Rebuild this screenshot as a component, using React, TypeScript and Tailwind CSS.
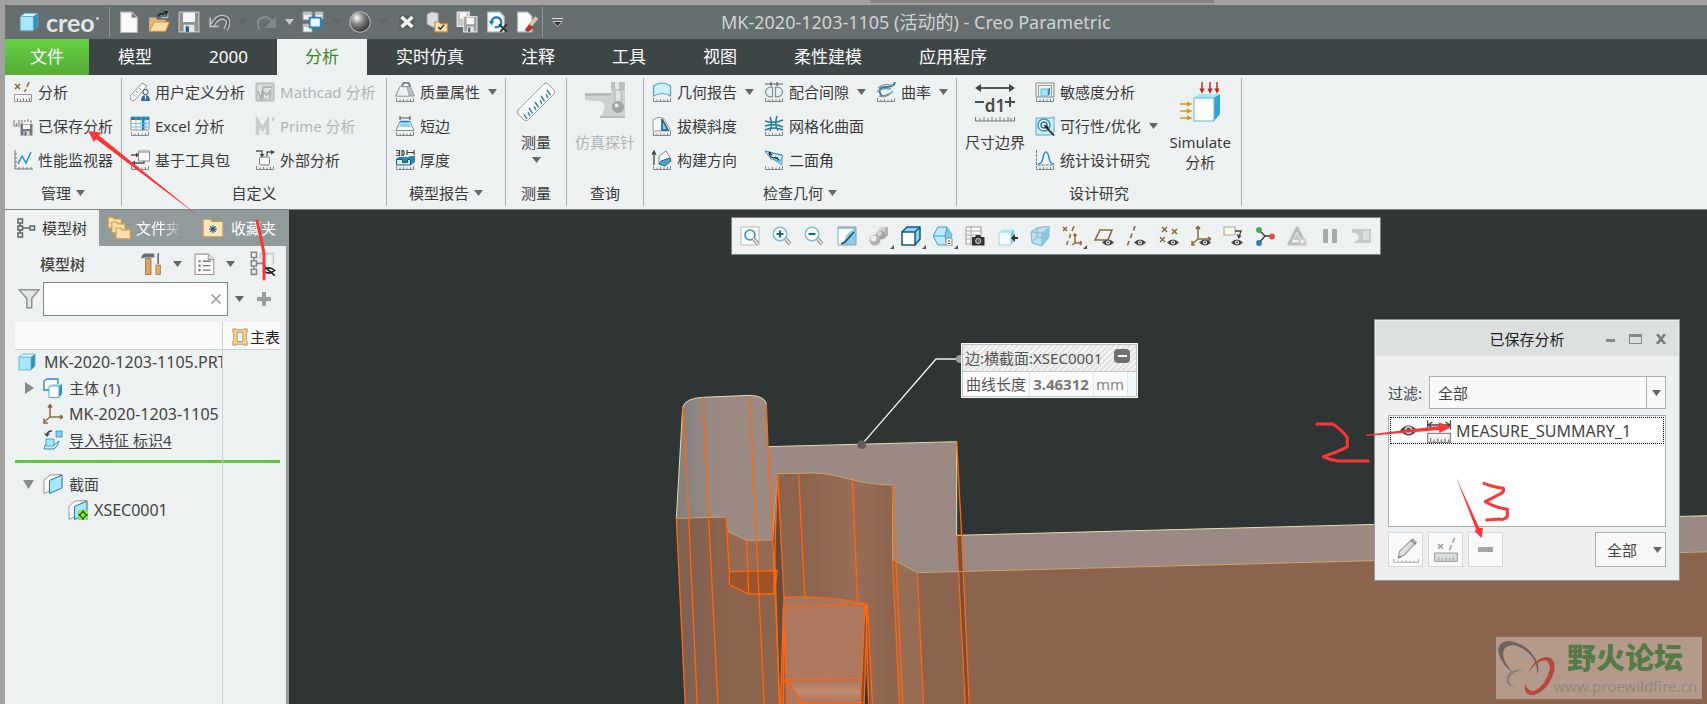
import type { ReactNode } from 'react';
import clsx from 'clsx';

const RULER = 'M1.5 16v3.5h17V16M5 17.5v2M8.5 17v2.5M12 17.5v2M15.5 17v2.5';

const ruler = <path d={RULER} fill="none" stroke="#858585" strokeWidth="1" />;

const eye = (
	<g>
		<path d="M8 16.5q6-6 12 0q-6 6-12 0z" fill="#444" />
		<circle cx="14" cy="16.4" r="2" fill="#f4f4f4" />
		<circle cx="14" cy="16.4" r=".9" fill="#444" />
	</g>
);

const handle = (
	<g>
		<path d="M13 12l5 6" stroke="#8d8d8d" strokeWidth="3.6" />
		<path d="M13 12l5 6" stroke="#e8e8e8" strokeWidth="1.6" />
	</g>
);

const iconShapes = {
	cube: (
		<g>
			<path d="M2 5l4-3h12l-4 3z" fill="#dff6fd" />
			<path d="M14 5l4-3v12l-4 4z" fill="#2f93bd" />
			<path d="M2 5h12v13H2z" fill="#a6e7fb" />
			<path d="M2 5h12v13H2zM2 5l4-3h12v12l-4 4" fill="none" stroke="#5aa9c9" strokeWidth=".8" />
		</g>
	),
	newFile: (
		<path d="M2.500 1h10l5 5v13.500h-15zM12.500 1v5h5" fill="#fafafa" stroke="#b9bdbd" />
	),
	open: (
		<g>
			<path d="M1 18V6h6l1.500 2H16v10z" fill="#e0b774" />
			<path d="M1.500 18.500l4-8.500H19.500l-3.500 8.500z" fill="#fbdd9f" stroke="#c98f3f" strokeWidth=".8" />
			<path d="M9 5q2-4 6-2" fill="none" stroke="#222" strokeWidth="1.600" />
			<path d="M14 0h4v5z" fill="#222" />
			<path d="M12 6h6V2" fill="none" stroke="#ddd" strokeWidth=".7" />
		</g>
	),
	save: (
		<g>
			<path d="M1 1h18v18H1z" fill="#8d9191" stroke="#c5c8c8" />
			<path d="M4.500 1.500h11V10h-11z" fill="#f5f5f5" />
			<path d="M5 12.500h10V19H5z" fill="#e4e4e4" />
			<path d="M7 14h3v5H7z" fill="#2c5a78" />
		</g>
	),
	undo: (
		<g fill="none">
			<path d="M2 6v8h8" stroke="#c4c8c8" strokeWidth="1.400" />
			<path d="M4 13Q9 4 15 6t1 11" stroke="#c4c8c8" strokeWidth="4.400" />
			<path d="M4 13Q9 4 15 6t1 11" stroke="#555c5d" strokeWidth="2" />
		</g>
	),
	redo: (
		<g fill="none" stroke="#828a8b">
			<path d="M4 17Q0 8 7 6t9 7" strokeWidth="2" />
			<path d="M18.500 6v9H10z" fill="#828a8b" />
		</g>
	),
	windows: (
		<g stroke="#aab0b0" strokeWidth=".8">
			<path d="M1 1h8v7H1zM12 1h7v6h-7zM1 12h8v7H1z" fill="#f2f2f2" />
			<path d="M1 1h8v2H1zM12 1h7v2h-7zM1 12h8v2H1z" fill="#c9cccc" />
			<path d="M7 6h10v9H7z" fill="#e9f8ff" stroke="#2087b7" strokeWidth="1.600" />
		</g>
	),
	sphere: (
		<circle cx="10" cy="10" r="9.300" fill="url(#sphere-shade)" stroke="#aeb3b3" strokeWidth="1" />
	),
	closeWindow: (
		<g>
			<path d="M3 4h14v12H3z" fill="#5b6162" />
			<path d="M5 5.500l10 9M15 5.500l-10 9" stroke="#f3f3f3" strokeWidth="3.200" />
		</g>
	),
	regenerate: (
		<g>
			<path d="M1 3l4-2 6 1v8l-4 5-6-3z" fill="#d9dcdc" stroke="#aaa" strokeWidth=".7" />
			<path d="M8 10h4l1 1.500h6.500V19H8z" fill="#fbe0a8" stroke="#c18a3c" />
			<path d="M11 14.500l2 2 3.500-4" fill="none" stroke="#333" strokeWidth="1.300" />
		</g>
	),
	saveCopy: (
		<g>
			<path d="M1 1h11v13H1z" fill="#c6c9c9" stroke="#e9e9e9" />
			<path d="M3.500 1.500h6V7h-6z" fill="#f5f5f5" />
			<path d="M7 5h12v14H7z" fill="#9a9e9e" stroke="#e4e4e4" />
			<path d="M9.500 6h7v6h-7z" fill="#fafafa" />
			<path d="M10 14h6v5h-6z" fill="#e4e4e4" />
			<path d="M11 15h2v4h-2z" fill="#3e6a87" />
		</g>
	),
	preview: (
		<g>
			<path d="M1.500 1h11l4 4v14h-15z" fill="#f7fafa" stroke="#b9bdbd" />
			<path d="M5 10a4.500 4.500 0 1 1 3 4.500" fill="none" stroke="#1b7fae" strokeWidth="2" />
			<path d="M2.500 9h5L5 13z" fill="#1b7fae" />
			<path d="M12 12l7 7M19 12l-6 7" stroke="#333" strokeWidth="1.800" />
		</g>
	),
	erase: (
		<g>
			<path d="M1.500 1h9l4 4v14h-13z" fill="#fafafa" stroke="#b9bdbd" />
			<path d="M19 6l-7 8" stroke="#d9c3a8" strokeWidth="3.600" />
			<path d="M12 12l-4 5q2 3 5 1l3-3.500z" fill="#b3372f" />
		</g>
	),
	analysis: (
		<g>
			<path d="M2 2l5 5M7 2L2 7M16 0l-2 5M13 7l-1.500 3" fill="none" stroke="#8a6d3b" strokeWidth="1.600" />
			<path d="M1.500 12.500h17v7h-17z" fill="#f4f4f4" stroke="#999" />
			<path d="M4.500 16v3M7.500 17v2M10.500 16v3M13.500 17v2M16.500 16v3" stroke="#777" />
		</g>
	),
	savedAnalysis: (
		<g>
			<path d="M1 4v6h6M3.500 7v3M6 4v5M9 4v4M12 4v2M15 3v3M18 4v3" fill="none" stroke="#888" strokeWidth="1.200" />
			<path d="M7.500 8h12v11.500h-12z" fill="#777" />
			<path d="M10 8.500h7V13h-7z" fill="#f3f3f3" />
			<path d="M10.500 15h6v4.500h-6z" fill="#ddd" />
			<path d="M11.500 15.500h2v4h-2z" fill="#3e6a87" />
		</g>
	),
	monitor: (
		<g fill="none">
			<path d="M2 0v19h18M2 4h2M2 8h2M2 12h2M2 16h2M6 19v-2M10 19v-2M14 19v-2M18 19v-2" stroke="#777" />
			<path d="M5 14l4-8 4 7 5-11" stroke="#2b8fc0" strokeWidth="1.500" />
		</g>
	),
	userDefined: (
		<g>
			<path d="M0 14L12 1l5 3-12 14q-2 2-4 0z" fill="#f5f5f5" stroke="#999" />
			<path d="M3 12l2 2M6 9l2 2M9 6l2 2" stroke="#999" />
			<circle cx="15.500" cy="10" r="2.600" fill="#e7f3f9" stroke="#444" />
			<path d="M11 19q0-6 4.500-6t4.500 6z" fill="#2b6f9d" />
			<path d="M14.500 13.500h2l-1 5z" fill="#fff" />
		</g>
	),
	excel: (
		<g>
			<path d="M1 1h18v13H1z" fill="#fff" stroke="#8d9598" />
			<path d="M1 1h18v3H1zM12 4h2.500v10H12z" fill="#1f7fb0" />
			<path d="M1 7.500h18M1 11h18M6 1v13M11 1v13M16 1v13" stroke="#6fb8dc" strokeWidth=".9" />
			{ruler}
		</g>
	),
	toolkit: (
		<g>
			<path d="M8.500 1h11v10h-11z" fill="#fafafa" stroke="#888" />
			<path d="M9 1h10v2H9z" fill="#bbb" />
			<path d="M1 5h6M4 13h10v-2" fill="none" stroke="#555" strokeWidth="1.300" />
			<path d="M6 2.500L9 5 6 7.500zM5 10.500L1.500 13 5 15.500z" fill="#444" />
			{ruler}
		</g>
	),
	mathcad: (
		<g>
			<path d="M1 1h18v18H1z" fill="#c9cccc" stroke="#b2b5b5" />
			<path d="M3 3h13v13H3z" fill="#dfe2e2" />
			<path d="M3 9l3 8L8 5h9M8 16V9l3.500 4L15 9v7" fill="none" stroke="#aaa" strokeWidth="1.500" />
		</g>
	),
	prime: (
		<g fill="none" stroke="#c9cdcd">
			<path d="M2.500 19V5l5 8 5-8v14" strokeWidth="3.600" />
			<path d="M18.500 1l-1 4" strokeWidth="2.200" />
		</g>
	),
	external: (
		<g>
			<rect x="4.500" y="7" width="10" height="8" rx="1.500" fill="#fafafa" stroke="#777" />
			<path d="M1 1h6v4M12 6V2h5" fill="none" stroke="#555" strokeWidth="1.300" />
			<path d="M4.500 4h5L7 7.500zM16 0l4 2-4 2.500z" fill="#444" />
			{ruler}
		</g>
	),
	mass: (
		<g>
			<path d="M7 5q0-4.500 4-4.500T15 5" fill="none" stroke="#777" strokeWidth="1.800" />
			<path d="M5 4.500h10l4.500 9.500H.500z" fill="#b7c1c5" stroke="#8c9396" />
			<path d="M5 4.500L1 14h13l-2-9z" fill="#eef1f2" stroke="#8c9396" strokeWidth=".6" />
			{ruler}
		</g>
	),
	shortEdge: (
		<g>
			<path d="M5 0v4M15 0v4M5 2h10" stroke="#555" strokeWidth="1.200" />
			<path d="M5 5.500h10l4 9H1z" fill="#fafafa" stroke="#888" />
			<path d="M6 6h8l2 5H4z" fill="#8fd8f5" />
			<path d="M5 5.500h10" stroke="#1b7fae" strokeWidth="1.400" />
			{ruler}
		</g>
	),
	thickness: (
		<g>
			<path d="M1 .500h3.500v5H1M1.500 3h3M7 .500v5h1q2.500-2.500 0-5zM12 0v5M19 0v5M12 2.500h7" fill="none" stroke="#444" strokeWidth="1.200" />
			<path d="M1 9l3-2h9l3-1h4v6l-4 3H1z" fill="#2a86b4" />
			<path d="M1.500 9.500h6v3h5v-3h3v5.500h-14z" fill="#d9f2fc" stroke="#14587d" />
			{ruler}
		</g>
	),
	geometryReport: (
		<g>
			<path d="M1.500 14V4q8-6 17 0v10q-8-5-17 0z" fill="#c9f0fc" stroke="#5f9db8" strokeWidth="1.200" />
			{ruler}
		</g>
	),
	draft: (
		<g>
			<path d="M1 4q7-5 11-1l7 12H1z" fill="#f5f5f5" stroke="#999" />
			<path d="M10 14V3l6 11z" fill="#77cdee" stroke="#14587d" strokeWidth="1.500" />
			{ruler}
		</g>
	),
	buildDirection: (
		<g>
			<path d="M2 15V2M0 5l2-4 2 4" fill="none" stroke="#444" strokeWidth="1.300" />
			<path d="M7 6l7-5 5 8-6 6-6-1z" fill="#fafafa" stroke="#888" />
			<path d="M7 14l2-3 9-3 1 3-6 5z" fill="#49a9d3" stroke="#1b6a94" />
			{ruler}
		</g>
	),
	clearance: (
		<g>
			<path d="M1 2h6M13 2h6M7 0v4M13 0v4M7 2h6" stroke="#555" strokeWidth="1.200" />
			<path d="M8.500 5v10q-7 0-7-5t7-5zM11.500 5v10q7 0 7-5t-7-5z" fill="#dff2f8" stroke="#7e8e95" strokeWidth="1.200" />
			{ruler}
		</g>
	),
	meshSurface: (
		<g fill="none" stroke="#1f78a5" strokeWidth="1.500">
			<path d="M1 5q9 3 18-1M1 10q9-3 18 1M1 14q9-4 18 0M6 1q3 7 0 14M13 0q-3 8 1 15" />
			{ruler}
		</g>
	),
	dihedral: (
		<g>
			<path d="M1 1l17 4v10L6 7z" fill="#8fdcf8" stroke="#2b8fc0" strokeWidth=".8" />
			<path d="M1 1l6 8 9 2 3-5z" fill="#c9f0fc" stroke="#2b8fc0" strokeWidth=".8" />
			<path d="M5 3q1 6 9 5M5 2l3 3M15 10l-4-3" fill="none" stroke="#222" strokeWidth="1.300" />
			{ruler}
		</g>
	),
	curvature: (
		<g fill="none">
			<path d="M19 0q-1 5-9 5t-6 6 9 1" stroke="#1f78a5" strokeWidth="1.800" />
			<path d="M2 6q8-6 15-2M1 10q6-5 14-3M3 14q8 2 14-5" stroke="#8d9598" strokeWidth="1.400" />
			{ruler}
		</g>
	),
	sensitivity: (
		<g>
			<path d="M1 1h18v14H1z" fill="#f4f4f4" stroke="#888" />
			<path d="M3.500 15V3.500h13V15" fill="none" stroke="#999" />
			<path d="M6 7h7v7H6z" fill="#a6e7fb" stroke="#5fb7d9" />
			<path d="M13 7l2-1.500V12l-2 2z" fill="#2b8fc0" />
			{ruler}
		</g>
	),
	feasibility: (
		<g>
			<path d="M1 2h15l3-1v15l-3 3H1z" fill="#c7eefb" stroke="#5aa9c9" />
			<circle cx="9" cy="9" r="6" fill="#fff" stroke="#4d8fb0" strokeWidth="1.500" />
			<circle cx="9" cy="9" r="3" fill="none" stroke="#1f78a5" strokeWidth="1.500" />
			<path d="M8 8l6 3-2 2z" fill="#222" />
			<path d="M10 10l9 9.500" stroke="#222" strokeWidth="1.800" />
		</g>
	),
	statistics: (
		<g fill="none">
			<path d="M1.500 0v15h18" stroke="#777" strokeDasharray="3 1" />
			<path d="M3 14q4 0 5-6t3-6 3 6 5 6" stroke="#2b8fc0" strokeWidth="1.500" />
			{ruler}
		</g>
	),
	measure: (
		<g>
			<path d="M1 14L14 1q1-.800 2 0l3 3q.800 1 0 2L6 19q-1 .800-2 0l-3-3q-.800-1 0-2z" fill="#fbfcfc" stroke="#9aa1a3" strokeWidth=".5" />
			<path d="M5.500 18.500L4 16M7 17l-1-1.800M8.300 15.700L6.500 13M10 14l-1-1.800M11.300 12.700L9.500 10M13 11l-1-1.800M14.300 9.700L12.500 7M16 8l-1-1.800M17.300 6.700L15.500 4" stroke="#2b7ea6" strokeWidth=".7" />
		</g>
	),
	probe: (
		<g>
			<path d="M0 5.500h13V4h7v14H7.500Q13 9 5 9.500L0 9z" fill="#cfd1d1" />
			<path d="M0 5.500h13v1.500H0zM7.500 17h12.500v1H7.500z" fill="#b9bcbc" />
			<path d="M13 0h7v4h-7z" fill="#bcbfbf" />
			<path d="M15 0h2v4h-2z" fill="#e4e5e5" />
			<path d="M15 4h3v7h-3z" fill="#e2e4e4" stroke="#a5a8a8" strokeWidth=".4" />
			<circle cx="16.500" cy="12.500" r="2.800" fill="#a3a6a6" stroke="#8f9393" strokeWidth=".3" />
			<circle cx="15.800" cy="11.800" r="1" fill="#e9eaea" />
		</g>
	),
	simulate: (
		<g>
			<path d="M7 8l3-2h10v10l-3 3.500z" fill="#3aa2cf" />
			<path d="M7 8l3-2h10l-3 2z" fill="#a6e7fb" />
			<path d="M7 8h10v11.500H7z" fill="#fff" stroke="#5fb7d9" strokeWidth=".5" />
			<path d="M11 0v4M15 0v4M18.500 0v4" stroke="#c3221b" strokeWidth=".7" />
			<path d="M9.700 3.300h2.600L11 5.900zM13.700 3.300h2.600L15 5.900zM17.200 3.300h2.600l-1.300 2.600z" fill="#c3221b" />
			<path d="M0 11h4M0 14.500h4M0 18h4" stroke="#d69a12" strokeWidth=".8" />
			<path d="M3.500 9.700v2.600L6.300 11zM3.500 13.200v2.600l2.800-1.300zM3.500 16.700v2.600L6.300 18z" fill="#d69a12" />
		</g>
	),
	zoomFit: (
		<g>
			<path d="M1 1h18v18H1z" fill="#fff" stroke="#b5b9b9" />
			<circle cx="10" cy="9" r="5" fill="#f4fbfe" stroke="#2b8fc0" strokeWidth="1.600" />
			{handle}
		</g>
	),
	zoomIn: (
		<g>
			{handle}
			<circle cx="8" cy="8" r="6.800" fill="#fff" stroke="#7fb9d2" strokeWidth="1.400" />
			<path d="M4.500 8h7M8 4.500v7" stroke="#14689a" strokeWidth="2.200" />
		</g>
	),
	zoomOut: (
		<g>
			{handle}
			<circle cx="8" cy="8" r="6.800" fill="#fff" stroke="#7fb9d2" strokeWidth="1.400" />
			<path d="M4.500 8h7" stroke="#14689a" strokeWidth="2.200" />
		</g>
	),
	repaint: (
		<g>
			<path d="M1 1h18v18H1z" fill="#8bcbe4" stroke="#8fa0a7" />
			<path d="M1.500 3H17Q9 8 8 13l-3 5.500H1.500z" fill="#fafafa" />
			<path d="M17 6l-9 10-4 2" stroke="#1d5068" strokeWidth="1.600" fill="none" />
		</g>
	),
	rendering: (
		<g>
			<path d="M10 1q0-1 9 0v8l-4 4-5-4z" fill="#d3d4d4" />
			<path d="M16 1h3v8l-4 4z" fill="#b0b1b1" />
			<circle cx="11.500" cy="9" r="4.500" fill="#a2a2a2" />
			<circle cx="10.500" cy="7.500" r="2.500" fill="#d5d5d5" />
			<circle cx="6" cy="14" r="5.500" fill="#b3b3b3" />
			<circle cx="4.500" cy="12.500" r="3" fill="#ececec" />
		</g>
	),
	displayStyle: (
		<g stroke="#125b80" strokeWidth="1.500" strokeLinejoin="round">
			<path d="M1 6l5-5h13v12l-5 6z" fill="#8fd0ea" />
			<path d="M1 6h13v13H1zM14 6l5-5" fill="#fff" />
		</g>
	),
	orientation: (
		<g>
			<path d="M5 1h9l5 8-5 10H5L0 10z" fill="#bfe9f8" stroke="#3a9cc4" />
			<path d="M14 1l5 8-5 10-2-9z" fill="#7cc8e6" />
			<path d="M0 10h12l2-9M12 10l2 9" fill="none" stroke="#3a9cc4" />
			<path d="M13 12h6v8h-6z" fill="#fafafa" stroke="#888" />
			<path d="M15 15h2M15 17.500h2" stroke="#444" />
		</g>
	),
	viewManager: (
		<g>
			<path d="M1 1h15v17H1z" fill="#fafafa" stroke="#999" />
			<path d="M1 5h15M1 9h15M1 13h8M6 1v17" stroke="#aaa" />
			<path d="M7 11h3l1-2h4l1 2h3.500v8.500H7z" fill="#333" />
			<circle cx="13.200" cy="15" r="2.600" fill="#666" stroke="#eee" strokeWidth=".8" />
		</g>
	),
	activateView: (
		<g>
			<path d="M1 6l4-3h11l-3 3z" fill="#bfeafa" />
			<path d="M13 6l3-3v12l-3 4z" fill="#7cc8e6" />
			<path d="M1 6h12v13H1z" fill="#f2fbfe" stroke="#9ad4ea" />
			<path d="M13 12l4-4v3h3v2h-3v3z" fill="#333" />
		</g>
	),
	perspective: (
		<g>
			<path d="M1 6l6-4 12-2v11l-7 9-10-3z" fill="#b9dff0" stroke="#7fb4cb" />
			<path d="M12 7l7-7v11l-7 9z" fill="#8cc6df" />
			<path d="M1 6l11 1v12M7 2v9l5 1M7 11l-5 5" fill="none" stroke="#8fb6c6" />
		</g>
	),
	datumFilters: (
		<g fill="none" stroke="#8a6d3b" strokeWidth="1.500">
			<path d="M1 1l4 4M5 1L1 5M12 0l-2 5M8.500 8l-1 4M6 15l-1.500 4M13 9v8h6M13 17l-3 2" />
			<path d="M11.500 10L13 8l1.500 2M18 15l2 2-2 2" />
		</g>
	),
	planeDisplay: (
		<g>
			<path d="M6 4h12l-4 10H1z" fill="none" stroke="#8a6d3b" strokeWidth="1.600" />
			{eye}
		</g>
	),
	axisDisplay: (
		<g>
			<path d="M9 0L7.500 4.500M6 7.500l-1.500 4.500M3 15l-1.500 4.500" stroke="#8a6d3b" strokeWidth="1.600" />
			{eye}
		</g>
	),
	pointDisplay: (
		<g>
			<path d="M3 1l5 5M8 1L3 6M13 3l5 5M18 3l-5 5M1 11l5 5M6 11l-5 5" stroke="#8a6d3b" strokeWidth="1.500" />
			{eye}
		</g>
	),
	csysDisplay: (
		<g>
			<path d="M7 1v12h12M7 13l-6 5M5 3l2-3 2 3M17 11l3 2-3 2M1 15v4h3" fill="none" stroke="#8a6d3b" strokeWidth="1.500" />
			{eye}
		</g>
	),
	annotationDisplay: (
		<g>
			<path d="M1 1h11v8H1z" fill="#fdf8e3" stroke="#aaa" strokeWidth="1.200" />
			<path d="M12 5h6l-2 6" fill="none" stroke="#444" strokeWidth="1.300" />
			<path d="M13.500 8l5 2-3 3z" fill="#444" />
			{eye}
		</g>
	),
	spinCenter: (
		<g>
			<path d="M4 4l6 6h7M10 10l-6 7" fill="none" stroke="#333" strokeWidth="1.300" />
			<circle cx="4" cy="4" r="2.900" fill="#4ba653" />
			<circle cx="17" cy="10.500" r="2.900" fill="#dd5145" />
			<circle cx="4" cy="17" r="2.900" fill="#2580b0" />
		</g>
	),
	simulationRun: (
		<g>
			<path d="M10 2l8 16H2z" fill="none" stroke="#b8bcbc" strokeWidth="3" strokeLinejoin="round" />
			<path d="M10 7l3 7H6z" fill="#c6caca" />
			<circle cx="15.500" cy="15.500" r="4" fill="#c9cccc" />
			<path d="M14 13.500v4l3.500-2z" fill="#fff" />
		</g>
	),
	pause: <path d="M3 3h5v14H3zM12 3h5v14h-5z" fill="#a7abac" />,
	probeSmall: (
		<g>
			<path d="M0 3h19v14H1l3-2q6-4 0-8H0z" fill="#c6caca" />
			<path d="M11 5h6v9h-6z" fill="#dcdfdf" />
		</g>
	),
	treeNodes: (
		<g fill="none" stroke="#5c6161" strokeWidth="1.500">
			<path d="M2 1h4.500v4H2zM2 8h4.500v4H2zM2 15h4.500v4H2zM14 8h4.500v4H14zM6.500 10H14M4 5v3M4 12v3" />
		</g>
	),
	folders: (
		<g fill="#fbe0a8" stroke="#c99a52">
			<path d="M1 1h4l1 1.500h6V10H1z" />
			<path d="M4 5h4l1 1.500h6V14H4z" />
			<path d="M7.500 10h4l1 1.500h7V19h-12z" />
		</g>
	),
	favorites: (
		<g>
			<path d="M1 2h7l1 2h10v14H1z" fill="#fbe5b8" stroke="#c99a52" />
			<path d="M10 7.500v7M6.500 11h7M7.500 8.500l5 5M12.500 8.500l-5 5" stroke="#1d5f88" strokeWidth="1.100" />
		</g>
	),
	tools: (
		<g>
			<path d="M5 5h5v14.500H5z" fill="#d9a45c" stroke="#9a6c2c" strokeWidth=".7" />
			<path d="M1 5q0-3 3-4.500h9V4H5z" fill="#666f73" />
			<path d="M16.500 0v10" stroke="#777" strokeWidth="1.600" />
			<path d="M14.500 11h4v8.500h-4z" fill="#e2b068" stroke="#9a6c2c" strokeWidth=".7" />
		</g>
	),
	settingsList: (
		<g>
			<path d="M1 1h12l5 5v13.500H1z" fill="#fcfcfc" stroke="#999" />
			<path d="M13 1v5h5" fill="#ddd" stroke="#999" />
			<path d="M8 7.500h7M8 11.500h7M8 15.500h7" stroke="#777" strokeWidth="1.200" />
			<path d="M4 6.500h2v2H4zM4 10.500h2v2H4zM4 14.500h2v2H4z" fill="#777" />
		</g>
	),
	treeToggle: (
		<g fill="none">
			<path d="M1 1h4v4H1zM1 7.500h4v4H1zM1 14h4v4H1zM3 5v2.500M3 11.500V14M5 9.500h6" stroke="#888" strokeWidth="1.200" />
			<path d="M8 2h10v8M8 2v4" stroke="#c8cccc" strokeWidth="1.200" />
			<path d="M10 15q4.500-4 9 0q-4.500 4-9 0M10 11l9 8" stroke="#222" strokeWidth="1.200" />
		</g>
	),
	filter: (
		<path d="M1 1.500h18l-6.500 8V18H8V9.500z" fill="#e3e6e6" stroke="#8d9292" strokeWidth="1.400" />
	),
	mainTable: (
		<g>
			<path d="M2 1h4l1 1h6l1-1h4v4l-1 1v8l1 1v4h-4l-1-1H7l-1 1H2v-4l1-1V6L2 5z" fill="#f2cf90" stroke="#a97c38" strokeWidth=".8" />
			<path d="M7 5h6v10H7z" fill="#eafaff" stroke="#a97c38" strokeWidth=".8" />
		</g>
	),
	bodies: (
		<g>
			<path d="M1 3l3-2h11v9l-3 2H1z" fill="#fff" stroke="#2b8fc0" strokeWidth="1.400" />
			<path d="M16 8l3-2v10l-3 3.500z" fill="#2f93bd" />
			<path d="M6 8l3-2h10l-3 2z" fill="#a6e7fb" />
			<path d="M6 8h10v11.500H6z" fill="#fff" stroke="#5aa9c9" />
		</g>
	),
	csys: (
		<g fill="none" stroke="#8a6d3b" strokeWidth="1.500">
			<path d="M7 1v12h12M7 13l-6 5M5 3.500L7 .500l2 3M17 11l3 2-3 2M1 14.500V19h4" />
		</g>
	),
	importFeature: (
		<g>
			<path d="M4 4q1-3 5-3" fill="none" stroke="#444" strokeWidth="1.400" />
			<path d="M1 3.500h6L4 7z" fill="#444" />
			<path d="M13 1h6v6h-6z" fill="#7fcfee" stroke="#2b8fc0" strokeWidth=".8" />
			<path d="M1 19l1-4h9l5-4-2 5-3 3z" fill="#c9f0fc" stroke="#1b6a94" strokeWidth=".8" />
			<path d="M3 9h8v7H3z" fill="#a6e7fb" stroke="#2b8fc0" strokeWidth=".8" />
		</g>
	),
	sections: (
		<g>
			<path d="M1 6l6-5 12-.500-10 5.500v10L1 19.500z" fill="#fafafa" stroke="#999" />
			<path d="M6.500 6.500L19 1v13L6.500 19.500z" fill="#a6e7fb" stroke="#1f78a5" />
		</g>
	),
	section: (
		<g>
			<path d="M1 6l6-5 12-.500-10 5.500v10L1 19.500z" fill="#fafafa" stroke="#999" />
			<path d="M6.500 6.500L19 1v13L6.500 19.500z" fill="#a6e7fb" stroke="#1f78a5" />
			<path d="M10 10h10v10H10z" fill="#8ee04e" />
			<path d="M15 10v10M10 15h10" stroke="#225c1c" />
			<path d="M15 11.500l3.500 3.500-3.500 3.500-3.500-3.500z" fill="#8ee04e" stroke="#225c1c" strokeWidth="1.200" />
		</g>
	),
	visible: (
		<g>
			<path d="M0 10Q10-2 20 10Q10 22 0 10z" fill="#444" />
			<circle cx="10" cy="9.500" r="4.600" fill="#d8d8d8" />
			<circle cx="10" cy="9.500" r="2.600" fill="#444" />
		</g>
	),
	summary: (
		<g>
			<path d="M.500 1v8M19.500 1v8" stroke="#444" />
			<path d="M1 5h18M4.500 2.500L1 5l3.500 2.500M15.500 2.500L19 5l-3.500 2.500" fill="none" stroke="#444" strokeWidth="1.200" />
			<path d="M.500 12h19v7.500H.500z" fill="#f0f0f0" stroke="#888" />
			<path d="M3 16v3M6 17v2M9 16v3M12 17v2M15 16v3M18 17v2" stroke="#777" />
		</g>
	),
	edit: (
		<g>
			<path d="M5 11L15 1.500l3 2.500-9.500 10L4 16z" fill="#dcdede" stroke="#999" strokeWidth=".8" />
			<path d="M14 2.500l3.500 3M4 16l2.500-1" stroke="#888" strokeWidth="1.300" />
			<path d="M.500 17v2.500h19V17M4 18v1M7 18v1M10 17.500v2M13 18v1M16 18v1" fill="none" stroke="#aaa" strokeWidth=".8" />
		</g>
	),
	analysisMuted: (
		<g stroke="#999">
			<path d="M3.500 5l4 4M7.500 5l-4 4M17 0l-1.500 4M14.500 6l-1.500 4" strokeWidth="1.200" />
			<path d="M.500 12.500h19v7H.500z" fill="#d9dbdb" strokeWidth=".8" />
			<path d="M4 16v3M7 17v2M10 16v3M13 17v2M16 16v3" strokeWidth=".8" />
		</g>
	),
};

type IconName = keyof typeof iconShapes;

interface IconProps {
	name: IconName;
	className?: string;
}

const Icon = ({ name, className = 'size-5' }: IconProps) => (
	<svg viewBox="0 0 20 20" className={clsx('shrink-0', className)} aria-hidden="true">
		{iconShapes[name]}
	</svg>
);

const Caret = ({ className = 'text-[#666]' }: { className?: string }) => (
	<svg viewBox="0 0 9 6" className={clsx('h-[6px] w-[9px] shrink-0', className)} aria-hidden="true">
		<path d="M0 0h9L4.500 6z" fill="currentColor" />
	</svg>
);

type QuickItem = { icon: IconName; label: string } | { caret: string };

const quickItems: QuickItem[] = [
	{ icon: 'newFile', label: '新建' },
	{ icon: 'open', label: '打开' },
	{ icon: 'save', label: '保存' },
	{ icon: 'undo', label: '撤消' },
	{ caret: 'text-[#5f6667]' },
	{ icon: 'redo', label: '重做' },
	{ caret: 'text-[#c5c9c9]' },
	{ icon: 'windows', label: '窗口' },
	{ caret: 'text-[#5f6667]' },
	{ icon: 'sphere', label: '外观' },
	{ caret: 'text-[#5f6667]' },
	{ icon: 'closeWindow', label: '关闭' },
	{ icon: 'regenerate', label: '重新生成' },
	{ icon: 'saveCopy', label: '保存副本' },
	{ icon: 'preview', label: '拭除未显示的' },
	{ icon: 'erase', label: '拭除当前' },
];

const TitleBar = () => (
	<header className="flex h-[34px] items-center bg-[#666e6f]">
		<div className="flex w-[104px] items-center gap-[6px] pl-[13px]">
			<Icon name="cube" className="size-[22px]" />
			<span className="font-['Lato'] text-[25px] leading-6 font-bold text-[#e3e7e7]">creo</span>
			<span className="-ml-[5px] mb-2 size-[3px] rounded-full bg-[#cfd3d3]" />
		</div>
		<div className="h-[30px] w-px bg-[#8e9596]" />
		<div className="flex items-center pl-[4px]">
			{quickItems.map((item, i) =>
				'icon' in item ? (
					<button key={i} title={item.label} className="flex w-[30px] justify-center">
						<Icon name={item.icon} className="size-[22px]" />
					</button>
				) : (
					<span key={i} className="flex w-[17px] justify-center">
						<Caret className={item.caret} />
					</span>
				),
			)}
		</div>
		<div className="h-[30px] w-px bg-[#8e9596]" />
		<button title="自定义快速访问工具栏" className="ml-[9px] flex flex-col items-center gap-[2px]">
			<span className="h-px w-[11px] bg-[#ddd]" />
			<svg viewBox="0 0 11 6" className="h-[6px] w-[11px]">
				<path d="M1 .500h9L5.500 5.500z" fill="#333" stroke="#ddd" strokeWidth=".8" />
			</svg>
		</button>
		<h1 className="ml-[158px] text-[18px] leading-6 whitespace-nowrap text-[#cfd3d3]">
			MK-2020-1203-1105 (活动的) - Creo Parametric
		</h1>
	</header>
);

const tabs = ['模型', '2000', '分析', '实时仿真', '注释', '工具', '视图', '柔性建模', '应用程序'];

const TabBar = () => (
	<nav className="flex h-9 gap-px bg-[#3d4546] text-[17px] text-white">
		<button className="w-[84px] bg-linear-to-b from-[#66d143] to-[#55ab37]">文件</button>
		{tabs.map((tab) => (
			<button
				key={tab}
				className={clsx('px-7 whitespace-nowrap', tab === '分析' && 'bg-[#edf1f2] text-[#3c8a1e]')}
			>
				{tab}
			</button>
		))}
	</nav>
);

interface CommandProps {
	icon: IconName;
	label: string;
	caret?: boolean;
	disabled?: boolean;
}

const Command = ({ icon, label, caret, disabled }: CommandProps) => (
	<button
		disabled={disabled}
		className={clsx('flex h-[34px] items-center gap-[5px] whitespace-nowrap', disabled && 'text-[#b0b4b5]')}
	>
		<Icon name={icon} />
		{label}
		{caret && (
			<span className="ml-[3px]">
				<Caret />
			</span>
		)}
	</button>
);

const Column = ({ className, children }: { className?: string; children: ReactNode }) => (
	<div className={clsx('flex flex-col items-start', className)}>{children}</div>
);

interface GroupProps {
	label: string;
	caret?: boolean;
	className?: string;
	children: ReactNode;
}

const Group = ({ label, caret, className = 'px-2', children }: GroupProps) => (
	<>
		<section className="flex shrink-0 flex-col">
			<div className={clsx('flex h-[102px] gap-[10px]', className)}>{children}</div>
			<h2 className="flex h-8 items-center justify-center gap-[5px]">
				{label}
				{caret && <Caret />}
			</h2>
		</section>
		<div className="my-[3px] w-px shrink-0 bg-[#a9afb0]" />
	</>
);

const Ribbon = () => (
	<div className="flex h-[135px] overflow-hidden border-b border-[#7d8788] bg-[#edf1f2] text-[#3a3a3a]">
		<Group label="管理" caret>
			<Column>
				<Command icon="analysis" label="分析" />
				<Command icon="savedAnalysis" label="已保存分析" />
				<Command icon="monitor" label="性能监视器" />
			</Column>
		</Group>
		<Group label="自定义">
			<Column>
				<Command icon="userDefined" label="用户定义分析" />
				<Command icon="excel" label="Excel 分析" />
				<Command icon="toolkit" label="基于工具包" />
			</Column>
			<Column className="w-[123px]">
				<Command icon="mathcad" label="Mathcad 分析" disabled />
				<Command icon="prime" label="Prime 分析" disabled />
				<Command icon="external" label="外部分析" />
			</Column>
		</Group>
		<Group label="模型报告" caret>
			<Column>
				<Command icon="mass" label="质量属性" caret />
				<Command icon="shortEdge" label="短边" />
				<Command icon="thickness" label="厚度" />
			</Column>
		</Group>
		<Group label="测量" className="justify-center">
			<button className="flex w-[60px] flex-col items-center pt-[7px]">
				<Icon name="measure" className="size-10" />
				<span className="mt-[10px] leading-5">测量</span>
				<span className="mt-[5px]">
					<Caret />
				</span>
			</button>
		</Group>
		<Group label="查询" className="justify-center">
			<button disabled className="flex w-[76px] flex-col items-center pt-[7px] text-[#b0b4b5]">
				<Icon name="probe" className="size-10" />
				<span className="mt-[10px] leading-5">仿真探针</span>
			</button>
		</Group>
		<Group label="检查几何" caret>
			<Column>
				<Command icon="geometryReport" label="几何报告" caret />
				<Command icon="draft" label="拔模斜度" />
				<Command icon="buildDirection" label="构建方向" />
			</Column>
			<Column>
				<Command icon="clearance" label="配合间隙" caret />
				<Command icon="meshSurface" label="网格化曲面" />
				<Command icon="dihedral" label="二面角" />
			</Column>
			<Column>
				<Command icon="curvature" label="曲率" caret />
			</Column>
		</Group>
		<Group label="设计研究">
			<button className="flex flex-col items-center pt-[7px]">
				<svg viewBox="0 0 40 40" className="size-10" aria-hidden="true">
					<path d="M2 6h36" stroke="#555" strokeWidth="1.800" />
					<path d="M0 6l6-4v8zM40 6l-6-4v8z" fill="#444" />
					<path d="M0 20h9M30 20h10M35 15v10" stroke="#4a4a4a" strokeWidth="2" />
					<path d="M.500 35v4h39v-4M5 36v3M9 35v4M13 36v3M17 35v4M21 36v3M25 35v4M29 36v3M33 35v4M36 36v3" fill="none" stroke="#777" />
					<text x="20" y="30" textAnchor="middle" fontFamily="Noto Sans" fontWeight="600" fontSize="17" fill="#4a4a4a">
						d1
					</text>
				</svg>
				<span className="mt-[10px] leading-5">尺寸边界</span>
			</button>
			<Column>
				<Command icon="sensitivity" label="敏感度分析" />
				<Command icon="feasibility" label="可行性/优化" caret />
				<Command icon="statistics" label="统计设计研究" />
			</Column>
			<button className="flex w-[65px] flex-col items-center pt-[7px]">
				<Icon name="simulate" className="size-10" />
				<span className="mt-[10px] leading-5">Simulate</span>
				<span className="leading-5">分析</span>
			</button>
		</Group>
	</div>
);

interface TreeItem {
	icon: IconName;
	label: string;
	indent: string;
	arrow?: 'open' | 'closed';
	underline?: boolean;
	latin?: boolean;
}

const features: TreeItem[] = [
	{ icon: 'cube', label: 'MK-2020-1203-1105.PRT', indent: 'pl-[2px]', latin: true },
	{ icon: 'bodies', label: '主体 (1)', indent: 'pl-[10px]', arrow: 'closed' },
	{ icon: 'csys', label: 'MK-2020-1203-1105', indent: 'pl-[28px]', latin: true },
	{ icon: 'importFeature', label: '导入特征 标识4', indent: 'pl-[28px]', underline: true },
];

const sections: TreeItem[] = [
	{ icon: 'sections', label: '截面', indent: 'pl-[8px]', arrow: 'open' },
	{ icon: 'section', label: 'XSEC0001', indent: 'pl-[53px]', latin: true },
];

const TreeRow = ({ item }: { item: TreeItem }) => (
	<tr className="h-[26px]">
		<td className="overflow-hidden p-0">
			<div className={clsx('flex items-center whitespace-nowrap', item.indent)}>
				{item.arrow === 'closed' && (
					<svg viewBox="0 0 9 12" className="mr-[9px] h-3 w-[9px] shrink-0">
						<path d="M0 0l9 6-9 6z" fill="#8b8b8b" />
					</svg>
				)}
				{item.arrow === 'open' && (
					<svg viewBox="0 0 11 9" className="mr-[9px] h-[9px] w-[11px] shrink-0">
						<path d="M0 0h11L5.500 9z" fill="#8b8b8b" />
					</svg>
				)}
				<Icon name={item.icon} className={item.icon === 'cube' ? 'mr-[7px] size-5' : 'mr-[6px] size-5'} />
				<span
					className={clsx(
						item.latin ? 'text-base leading-[22px]' : 'leading-[22px]',
						item.underline && 'underline underline-offset-2',
					)}
				>
					{item.label}
				</span>
			</div>
		</td>
		<td className="p-0" />
	</tr>
);

const ModelTree = () => (
	<aside className="flex w-[284px] shrink-0 flex-col border-r-[3px] border-[#919b9c] bg-[#edf1f2] text-[#444]">
		<div className="-mr-[3px] flex h-9 bg-[#929b9c] text-white">
			<button className="flex w-[94px] items-center gap-[6px] bg-[#edf1f2] pl-[11px] whitespace-nowrap text-[#3a3a3a]">
				<Icon name="treeNodes" className="h-6 w-5" />
				模型树
			</button>
			<button className="ml-[8px] flex w-[76px] items-center gap-[5px] whitespace-nowrap">
				<Icon name="folders" className="size-6" />
				<span className="mask-r-from-60%">文件夹</span>
			</button>
			<button className="ml-[19px] flex items-center gap-[7px] whitespace-nowrap">
				<Icon name="favorites" className="size-[22px]" />
				收藏夹
			</button>
		</div>
		<div className="flex h-9 items-center pl-[35px]">
			<h2 className="w-[100px] font-medium">模型树</h2>
			<button title="设置" className="flex items-center gap-[11px]">
				<Icon name="tools" className="h-6 w-[22px]" />
				<Caret />
			</button>
			<button title="显示" className="ml-[12px] flex items-center gap-[10px]">
				<Icon name="settingsList" className="h-6 w-[22px]" />
				<Caret />
			</button>
			<button title="树列" className="ml-[15px]">
				<Icon name="treeToggle" className="size-[26px]" />
			</button>
		</div>
		<div className="flex h-[34px] items-center pl-[13px]">
			<Icon name="filter" className="size-[22px]" />
			<div className="relative ml-[3px]">
				<input
					aria-label="过滤"
					className="block h-[34px] w-[185px] border border-[#7d8788] bg-white px-2 pr-7 outline-none"
				/>
				<button title="清除" className="absolute top-[12px] right-[7px]">
					<svg viewBox="0 0 10 10" className="size-[10px]">
						<path d="M.500.500l9 9M9.500.500l-9 9" stroke="#999" strokeWidth="1.500" />
					</svg>
				</button>
			</div>
			<span className="ml-[7px]">
				<Caret />
			</span>
			<button title="添加" className="ml-[13px]">
				<svg viewBox="0 0 14 14" className="size-[14px]">
					<path d="M7 0v14M0 7h14" stroke="#9a9e9e" strokeWidth="4" />
				</svg>
			</button>
		</div>
		<div className="relative mt-[6px] mr-[6px] ml-[10px] flex-1">
			<table className="w-full table-fixed border-collapse">
				<thead>
					<tr className="h-[27px] border-b border-[#cdd1d3] bg-[#fafafa]">
						<th className="w-[208px] p-0" />
						<th className="p-0 font-normal text-[#222]">
							<div className="flex items-center gap-[1px] overflow-hidden pt-1 pl-[8px] leading-[22px] whitespace-nowrap">
								<Icon name="mainTable" className="size-[18px]" />
								主表
							</div>
						</th>
					</tr>
				</thead>
				<tbody>
					{features.map((item) => (
						<TreeRow key={item.label} item={item} />
					))}
					<tr>
						<td colSpan={2} className="px-0 pt-[7px] pb-[8px]">
							<div className="h-[3px] bg-[#62c440]" />
						</td>
					</tr>
					{sections.map((item) => (
						<TreeRow key={item.label} item={item} />
					))}
				</tbody>
			</table>
			<div className="absolute inset-y-0 left-[207px] w-px bg-[#cdd1d3]" />
		</div>
	</aside>
);

const viewTools: { icon: IconName; label: string; menu?: boolean }[] = [
	{ icon: 'zoomFit', label: '重新调整' },
	{ icon: 'zoomIn', label: '放大' },
	{ icon: 'zoomOut', label: '缩小' },
	{ icon: 'repaint', label: '重画' },
	{ icon: 'rendering', label: '渲染选项', menu: true },
	{ icon: 'displayStyle', label: '显示样式', menu: true },
	{ icon: 'orientation', label: '已保存方向', menu: true },
	{ icon: 'viewManager', label: '视图管理器' },
	{ icon: 'activateView', label: '视图法向' },
	{ icon: 'perspective', label: '透视图' },
	{ icon: 'datumFilters', label: '基准显示过滤器', menu: true },
	{ icon: 'planeDisplay', label: '平面显示' },
	{ icon: 'axisDisplay', label: '轴显示' },
	{ icon: 'pointDisplay', label: '点显示' },
	{ icon: 'csysDisplay', label: '坐标系显示' },
	{ icon: 'annotationDisplay', label: '注释显示' },
	{ icon: 'spinCenter', label: '旋转中心' },
	{ icon: 'simulationRun', label: '仿真' },
	{ icon: 'pause', label: '暂停' },
	{ icon: 'probeSmall', label: '仿真探针' },
];

const ViewToolbar = () => (
	<div className="absolute top-[7px] left-[442px] grid h-[38px] w-[650px] grid-cols-20 border border-[#7d8788] bg-[#edf1f2] px-[2px]">
		{viewTools.map(({ icon, label, menu }) => (
			<button key={icon} title={label} className="relative flex items-center justify-center">
				<Icon name={icon} />
				{menu && (
					<svg viewBox="0 0 4 4" className="absolute right-[1px] bottom-[5px] size-1">
						<path d="M4 0v4H0z" fill="#555" />
					</svg>
				)}
			</button>
		))}
	</div>
);

const PartModel = () => (
	<svg className="absolute inset-0 size-full" aria-hidden="true">
		<defs>
			<linearGradient id="post" x1="110" x2="240" y1="0" y2="0" gradientUnits="userSpaceOnUse">
				<stop offset="0" stopColor="#85807f" />
				<stop offset="1" stopColor="#9b8a83" />
			</linearGradient>
			<linearGradient id="block" x1="110" x2="250" y1="0" y2="0" gradientUnits="userSpaceOnUse">
				<stop offset="0" stopColor="#7e6054" />
				<stop offset="1" stopColor="#8c634c" />
			</linearGradient>
			<linearGradient id="slot" x1="480" x2="760" y1="0" y2="0" gradientUnits="userSpaceOnUse">
				<stop offset="0" stopColor="#8c644e" />
				<stop offset=".6" stopColor="#986c56" />
				<stop offset="1" stopColor="#8d654f" />
			</linearGradient>
			<linearGradient id="pin" x1="0" x2="0" y1="1075" y2="1152" gradientUnits="userSpaceOnUse">
				<stop offset="0" stopColor="#a06e56" />
				<stop offset=".5" stopColor="#c48c72" />
				<stop offset="1" stopColor="#a87259" />
			</linearGradient>
		</defs>
		<g transform="translate(351 110) scale(.33333)">
			<path
				d="M109 595L128 262Q135 235 188 232L330 226Q375 228 379 252L384 380L950 365V646L6000 514V622L950 757H270L150 600Z"
				fill="url(#post)"
			/>
			<path
				d="M109 595L258 591L263 634L320 661L398 660L403 590L413 461L520 459C610 462 640 493 758 495V718L832 758L6000 622V1160H136Z"
				fill="#8c634c"
			/>
			<path d="M109 595L258 591L270 1160H136Z" fill="url(#block)" />
			<path d="M263 634L320 661L398 660L402 753L268 755Z" fill="#946a54" />
			<path d="M268 755L412 752L402 820L326 822L268 794Z" fill="#9c5329" />
			<path d="M476 461C620 462 640 493 758 495V718L778 1160H698L682 853L494 828Z" fill="url(#slot)" />
			<path d="M758 718L832 758L851 1160H778Z" fill="#976c55" />
			<path d="M407 590L413 461L432 860L420 1160L398 660Z" fill="#674b3d" />
			<path d="M432 832Q560 825 682 853L430 860Z" fill="#a5775e" />
			<path d="M430 860L675 856L662 1160H440Z" fill="#ae785e" />
			<path d="M440 1083L660 1075V1160H484Q470 1110 440 1083Z" fill="url(#pin)" />
			<path d="M675 856L684 854L690 1160H662Z" fill="#75523f" />
			<path d="M677 1055L686 1160H671Z" fill="#2f3535" />
			<path d="M950 646H965L988 1160H975Z" fill="#70503f" />

			<g fill="none" stroke="#e5dca6" strokeWidth="3">
				<path d="M109 595L128 262Q135 235 188 232L330 226Q375 228 379 252" />
				<path d="M384 380L950 365V646L6000 514" />
			</g>
			<path
				d="M109 595L258 591M263 634L320 661L398 660L403 590L413 461L520 459C610 462 640 493 758 495V718L832 758L6000 622"
				fill="none"
				stroke="#cda668"
				strokeWidth="3"
			/>
			<g fill="none" stroke="#ff670f" strokeWidth="4" strokeLinejoin="round">
				<path d="M109 595L136 1160M128 262L146 595L172 1160M188 232L206 595L234 1160M328 228L349 660L373 1160" />
				<path d="M379 252L384 380L398 660L420 1160M258 591L268 755V794L326 822H402L412 752L268 755M320 661L326 822" />
				<path d="M413 461L432 832M407 590L402 820M413 461L404 700L418 1160M476 461L494 828M637 480L653 850" />
				<path d="M757 495L768 720L789 1160M757 718L779 1160M832 758L851 1160" />
				<path d="M950 365L965 646L988 1160M950 646L976 1160" />
				<path d="M432 832Q560 825 682 853L430 860L422 1160M430 860L442 1160M432 832L430 1160" />
				<path d="M682 853L698 1160M682 853L672 1160M675 856L661 1160M678 856L686 1160" />
				<path d="M424 1080L662 1075M430 1080Q470 1100 485 1152M470 1150L670 1148" />
			</g>

			<path d="M665 374L888 117H950" fill="none" stroke="#f2f2f2" strokeWidth="4" />
			<circle cx="665" cy="374" r="12" fill="#6a5953" stroke="#5a5f60" strokeWidth="2" />
			<circle cx="960" cy="117" r="12" fill="#9a9fa0" />
		</g>
	</svg>
);

const MeasureCallout = () => (
	<div className="absolute top-[133px] left-[672px] w-[177px] border border-white bg-white">
		<div className="border border-[#bcc3c5] text-[#555]">
			<div className="flex h-[27px] items-center justify-between border-b border-[#bcc3c5] bg-[repeating-linear-gradient(135deg,#f4f4f4_0_2px,#e2e2e2_2px_4px)] pr-[6px] pl-[2px]">
				<span className="whitespace-nowrap">边:横截面:XSEC0001</span>
				<button title="折叠" className="mb-1 flex h-[14px] w-4 items-center justify-center rounded bg-[#6e6e75]">
					<span className="h-[2px] w-[9px] bg-white" />
				</button>
			</div>
			<table className="w-full table-fixed border-collapse">
				<tbody>
					<tr className="h-6">
						<th className="w-[66px] p-0 pl-[3px] text-left font-normal whitespace-nowrap">曲线长度</th>
						<td className="w-[64px] border-x border-[#e2e8ea] bg-[#fafafa] p-0 text-center font-bold text-[#777]">
							3.46312
						</td>
						<td className="border-r border-[#e2e8ea] bg-[#fafafa] p-0 text-center text-[#888]">mm</td>
						<td className="w-[9px] bg-[#eef7fc] p-0" />
					</tr>
				</tbody>
			</table>
		</div>
	</div>
);

const dialogButton = 'flex size-[35px] items-center justify-center border border-[#d3d8dc] bg-[#fafafa]';

const SavedAnalysisDialog = () => (
	<div
		role="dialog"
		aria-label="已保存分析"
		className="absolute top-[109px] right-[27px] w-[306px] border border-[#8b9496] bg-[#edeff1] text-[#444]"
	>
		<div className="relative m-px flex h-[35px] items-center justify-center bg-[#dbdfe0] text-[#222]">
			已保存分析
			<div className="absolute right-[12px] flex items-center gap-[14px]">
				<button title="最小化" className="flex h-3 items-center">
					<span className="mt-1 h-[3px] w-[9px] bg-[#85898c]" />
				</button>
				<button title="最大化" className="h-[10px] w-[13px] border border-t-[3px] border-[#85898c]" />
				<button title="关闭">
					<svg viewBox="0 0 10 10" className="size-[10px]">
						<path d="M1 0l8 10M9 0L1 10" stroke="#777b7e" strokeWidth="2.600" />
					</svg>
				</button>
			</div>
		</div>
		<div className="px-[13px] pt-[19px] pb-[13px]">
			<div className="flex items-center justify-between">
				<label htmlFor="analysis-filter">过滤:</label>
				<div className="relative w-[237px]">
					<select
						id="analysis-filter"
						className="block h-[33px] w-full appearance-none border border-[#a9aeb1] bg-[#f8f8f8] pl-[8px] outline-none"
					>
						<option>全部</option>
					</select>
					<span className="pointer-events-none absolute inset-y-0 right-0 flex w-5 items-center justify-center border-l border-[#a9aeb1]">
						<Caret />
					</span>
				</div>
			</div>
			<ul className="mt-[6px] h-[112px] border border-[#a9aeb1] bg-white p-px">
				<li className="flex h-[27px] items-center border border-dotted border-black pl-[9px] text-base">
					<Icon name="visible" className="size-[17px]" />
					<Icon name="summary" className="mr-[5px] ml-[10px] size-6" />
					MEASURE_SUMMARY_1
				</li>
			</ul>
			<div className="mt-[5px] flex gap-[5px]">
				<button title="编辑" className={dialogButton}>
					<Icon name="edit" className="size-[26px]" />
				</button>
				<button title="测量特征" className={dialogButton}>
					<Icon name="analysisMuted" className="size-6" />
				</button>
				<button title="删除" className={dialogButton}>
					<span className="h-[5px] w-[15px] bg-[#a3a5a7]" />
				</button>
				<div className="relative ml-auto">
					<select
						aria-label="范围"
						className="block h-[35px] w-[71px] appearance-none border border-[#a9aeb1] bg-[#f8f8f8] pl-[11px] outline-none"
					>
						<option>全部</option>
					</select>
					<span className="pointer-events-none absolute inset-y-0 right-[4px] flex items-center">
						<Caret />
					</span>
				</div>
			</div>
		</div>
		<svg className="pointer-events-none absolute inset-0 size-full overflow-visible" aria-hidden="true">
			<g transform="translate(-75 -20) scale(.33333)">
				<g fill="none" stroke="#fc3638" strokeWidth="9" strokeLinecap="round" strokeLinejoin="round">
					<path d="M50 372H98Q120 385 142 412V440Q115 455 95 461L70 470Q90 480 115 483H205" />
					<path d="M552 550Q575 560 610 565Q614 577 600 582L556 605Q580 620 622 628V650Q610 662 600 657L560 660" />
				</g>
				<path d="M198 404L418 378L416 367L455 381L418 399L417 390L198 408Z" fill="#fc3638" />
				<path d="M468 532L538 684L549 683L545 714L523 693L529 690Z" fill="#fc3638" />
			</g>
		</svg>
	</div>
);

const Watermark = () => (
	<div className="absolute right-[5px] bottom-[5px] h-[62px] w-[206px] bg-[#b39a8b] pr-[5px] text-right">
		<svg viewBox="0 0 180 186" className="absolute top-0 left-0 h-[62px] w-[60px]" aria-hidden="true">
			<path
				d="M62 116Q15 85 7 45Q5 15 35 12Q85 15 115 60Q135 90 122 116Q128 85 105 55Q70 20 38 26Q18 32 22 60Q30 90 62 116Z"
				fill="#6d615e"
			/>
			<path d="M82 98Q45 95 32 118Q25 150 62 148Q35 145 40 122Q50 103 82 98Z" fill="#8d7d77" />
			<path
				d="M98 104Q120 60 155 60Q180 65 175 100Q160 160 112 175Q80 175 88 140Q95 165 115 162Q150 145 162 95Q160 70 145 70Q120 75 98 104Z"
				fill="#b5483b"
			/>
		</svg>
		<div className="pr-[14px] font-['Noto_Sans_CJK_SC'] text-[29px] leading-[38px] font-black text-[#557a48]">
			野火论坛
		</div>
		<div className="leading-[22px] text-[#8b8b7b]">www.proewildfire.cn</div>
	</div>
);

const GraphicsArea = () => (
	<main className="relative min-h-[494px] flex-1 overflow-hidden bg-[#2f3535]">
		<PartModel />
		<ViewToolbar />
		<MeasureCallout />
		<SavedAnalysisDialog />
		<Watermark />
	</main>
);

const StepOneMark = () => (
	<svg className="pointer-events-none absolute top-0 left-0 h-[300px] w-[300px]" aria-hidden="true">
		<path d="M88 131L101 132.500L99 135.500L201 218L96 139L94 142Z" fill="#fc3638" />
		<path d="M257 221L262 243L264 254V279" fill="none" stroke="#fc3638" strokeWidth="3" strokeLinecap="round" />
	</svg>
);

const App = () => (
	<div className="relative flex min-h-screen flex-col bg-[#a1a1a1] pt-[5px] pl-[5px] font-['Noto_Sans','Noto_Sans_CJK_SC',sans-serif] text-[15px] leading-[22px]">
		<svg className="absolute size-0" aria-hidden="true">
			<radialGradient id="sphere-shade" cx=".35" cy=".3" r=".75">
				<stop offset="0" stopColor="#fff" />
				<stop offset=".4" stopColor="#8b8b8b" />
				<stop offset="1" stopColor="#2a2a2a" />
			</radialGradient>
		</svg>
		<div className="absolute top-0 left-[870px] h-[3px] w-[344px] bg-[#858585]" />
		<TitleBar />
		<TabBar />
		<Ribbon />
		<div className="flex flex-1">
			<ModelTree />
			<GraphicsArea />
		</div>
		<StepOneMark />
	</div>
);

export default App;
